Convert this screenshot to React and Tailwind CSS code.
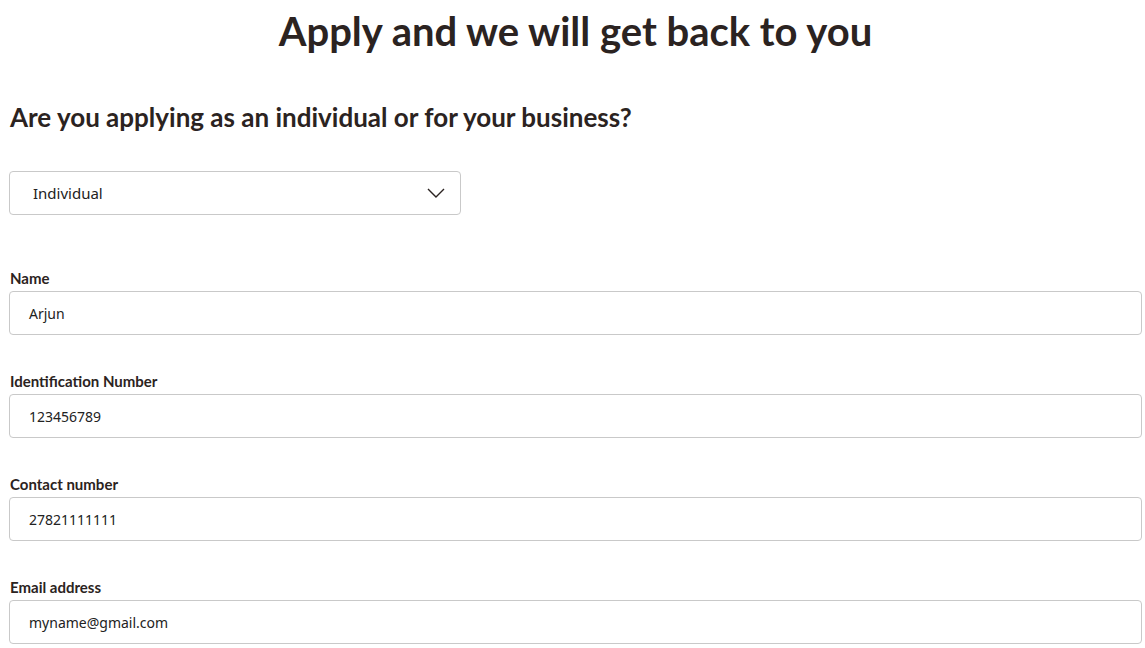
import { useState } from 'react';

const fields = [
    { label: 'Name', value: 'Arjun' },
    { label: 'Identification Number', value: '123456789' },
    { label: 'Contact number', value: '27821111111' },
    { label: 'Email address', value: 'myname@gmail.com' },
];

function Chevron() {
    return (
        <svg width="18" height="10" viewBox="0 0 18 10" fill="none" stroke="#2b2321" strokeWidth="1.4">
            <path d="M1 1l8 8 8-8" />
        </svg>
    );
}

export default function App() {
    const [type] = useState('Individual');

    return (
        <div className="min-h-screen bg-white pl-[9px] pr-[3px] text-[#2b2321] font-['Lato','Liberation_Sans',sans-serif]">
            <h1 className="pt-[7px] text-center text-[40px] font-bold leading-[48px]">
                Apply and we will get back to you
            </h1>

            <h2 className="mt-[46px] pl-px text-[26px] font-bold leading-[32px]">
                Are you applying as an individual or for your business?
            </h2>

            <div className="mt-[38px] flex h-[44px] w-[452px] items-center justify-between rounded-[4px] border border-[#c9c9c9] pl-[23px] pr-[15px]">
                <span className="font-['Noto_Sans',sans-serif] text-[15px] text-[#222]">{type}</span>
                <Chevron />
            </div>

            <div className="mt-[53px] flex flex-col gap-[36px]">
                {fields.map((field) => (
                    <div key={field.label}>
                        <label className="block pl-px text-[15px] font-bold leading-[21px]">
                            {field.label}
                        </label>
                        <div className="mt-[2px] flex h-[44px] items-center rounded-[4px] border border-[#c9c9c9] pl-[19px]">
                            <span className="font-['Noto_Sans',sans-serif] text-[14px] text-[#222]">
                                {field.value}
                            </span>
                        </div>
                    </div>
                ))}
            </div>
        </div>
    );
}
